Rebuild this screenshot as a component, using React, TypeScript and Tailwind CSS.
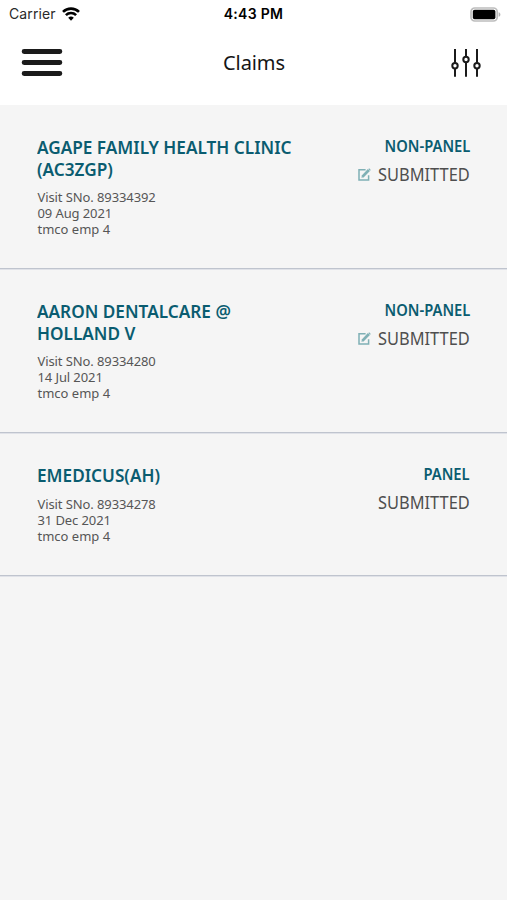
type Claim = {
  provider: string;
  visitNo: string;
  date: string;
  member: string;
  network: string;
  status: string;
  editable: boolean;
};

const claims: Claim[] = [
  {
    provider: "AGAPE FAMILY HEALTH CLINIC (AC3ZGP)",
    visitNo: "89334392",
    date: "09 Aug 2021",
    member: "tmco emp 4",
    network: "NON-PANEL",
    status: "SUBMITTED",
    editable: true,
  },
  {
    provider: "AARON DENTALCARE @ HOLLAND V",
    visitNo: "89334280",
    date: "14 Jul 2021",
    member: "tmco emp 4",
    network: "NON-PANEL",
    status: "SUBMITTED",
    editable: true,
  },
  {
    provider: "EMEDICUS(AH)",
    visitNo: "89334278",
    date: "31 Dec 2021",
    member: "tmco emp 4",
    network: "PANEL",
    status: "SUBMITTED",
    editable: false,
  },
];

function WifiIcon() {
  return (
    <svg width="18" height="14" viewBox="0 0 18 14" fill="none" stroke="#000" strokeWidth="2.6">
      <path d="M1 4.9a11.4 11.4 0 0 1 16 0" />
      <path d="M3.9 8.1a7.3 7.3 0 0 1 10.2 0" />
      <path d="M9 13.7 6.2 10.8a4 4 0 0 1 5.6 0z" fill="#000" stroke="none" />
    </svg>
  );
}

function BatteryIcon() {
  return (
    <svg width="31" height="15" viewBox="0 0 31 15">
      <rect x="1" y="1" width="26.2" height="13" rx="3.8" fill="#fff" stroke="#bdbdbd" strokeWidth="1.7" />
      <rect x="2.8" y="2.8" width="22.6" height="9.4" rx="1.8" fill="#000" />
      <path d="M28.6 5.2c1.2.4 1.8 1.2 1.8 2.3s-.6 1.9-1.8 2.3z" fill="#b5b5b5" />
    </svg>
  );
}

function MenuIcon() {
  return (
    <svg width="42" height="28" viewBox="0 0 42 28" stroke="#1b1b1b" strokeWidth="4.8" strokeLinecap="round">
      <path d="M3.1 2.5h35.8M3.1 13.5h35.8M3.1 24.5h35.8" />
    </svg>
  );
}

function FilterIcon() {
  return (
    <svg width="30" height="28" viewBox="0 0 30 28" fill="none" stroke="#1b1b1b" strokeWidth="2">
      <path d="M4 0v13.7M4 19.7v8M15 0v7.5M15 13.5v14.2M26 0v13.7M26 19.7v8" />
      <circle cx="4" cy="16.7" r="2.7" />
      <circle cx="15" cy="10.5" r="2.7" />
      <circle cx="26" cy="16.7" r="2.7" />
    </svg>
  );
}

function EditIcon() {
  return (
    <svg className="-mr-[1.5px]" width="13" height="13" viewBox="0 0 13 13" fill="none" stroke="#7fb0b5">
      <path d="M7.6 1.8H1v10.1h9.6V7.2" strokeWidth="1.5" />
      <path d="M4.6 8.6 10.9 2" strokeWidth="2.8" />
      <path d="m3.4 9.8.5-2.4 1.9 1.8zM10.4 1.1l.8-.8 1.6 1.6-.8.8z" fill="#7fb0b5" stroke="none" />
    </svg>
  );
}

function StatusBar() {
  return (
    <div className="grid h-7 grid-cols-3 items-center pl-[9px] pr-[6px] font-['Inter','Liberation_Sans',sans-serif] text-black">
      <div className="flex items-center gap-[6px]">
        <span className="text-[14px] leading-4 tracking-[0.1px] text-[#2a2a2a]">Carrier</span>
        <WifiIcon />
      </div>
      <span className="whitespace-nowrap pr-[3px] text-center text-[14px] font-semibold leading-4 tracking-[0.3px]">
        4:43 PM
      </span>
      <div className="flex justify-end">
        <BatteryIcon />
      </div>
    </div>
  );
}

function Header() {
  return (
    <header className="flex h-[77px] items-center justify-between pb-[7px] pl-[21px] pr-[26px]">
      <button type="button" aria-label="Menu" className="w-[42px]">
        <MenuIcon />
      </button>
      <h1 className="pr-[6px] text-[20px] leading-7 tracking-[-0.1px] text-[#151515]">Claims</h1>
      <button type="button" aria-label="Filter">
        <FilterIcon />
      </button>
    </header>
  );
}

function ClaimRow({ claim }: { claim: Claim }) {
  return (
    <li className="flex justify-between border-b border-[#bfc4ce] pb-[31px] pl-[37.5px] pr-[37px] pt-8 shadow-[0_1px_0_#e0e2e8]">
      <div className="w-[275px]">
        <h2 className="-ml-[0.5px] origin-left scale-x-[0.955] text-[18px] font-semibold leading-[21.5px] text-[#0a5c70]">
          {claim.provider}
        </h2>
        <div className="mt-[9px] text-[13px] leading-4 text-[#565656]">
          <p className="tracking-[-0.1px]">Visit SNo. {claim.visitNo}</p>
          <p className="tracking-[-0.1px]">{claim.date}</p>
          <p>{claim.member}</p>
        </div>
      </div>
      <div className="flex flex-col items-end">
        <p className="-mt-px origin-right scale-x-[0.95] text-[15.5px] font-semibold leading-5 text-[#0a5c70]">
          {claim.network}
        </p>
        <div className="mt-[6px] flex items-center">
          {claim.editable && <EditIcon />}
          <span className="origin-right scale-x-[0.91] text-[18px] leading-6 text-[#4e4e4e]">{claim.status}</span>
        </div>
      </div>
    </li>
  );
}

export default function App() {
  return (
    <div className="min-h-screen w-full bg-[#f5f5f5] font-['Noto_Sans','Open_Sans',sans-serif]">
      <div className="bg-white">
        <StatusBar />
        <Header />
      </div>
      <ul>
        {claims.map((claim) => (
          <ClaimRow key={claim.visitNo} claim={claim} />
        ))}
      </ul>
    </div>
  );
}
